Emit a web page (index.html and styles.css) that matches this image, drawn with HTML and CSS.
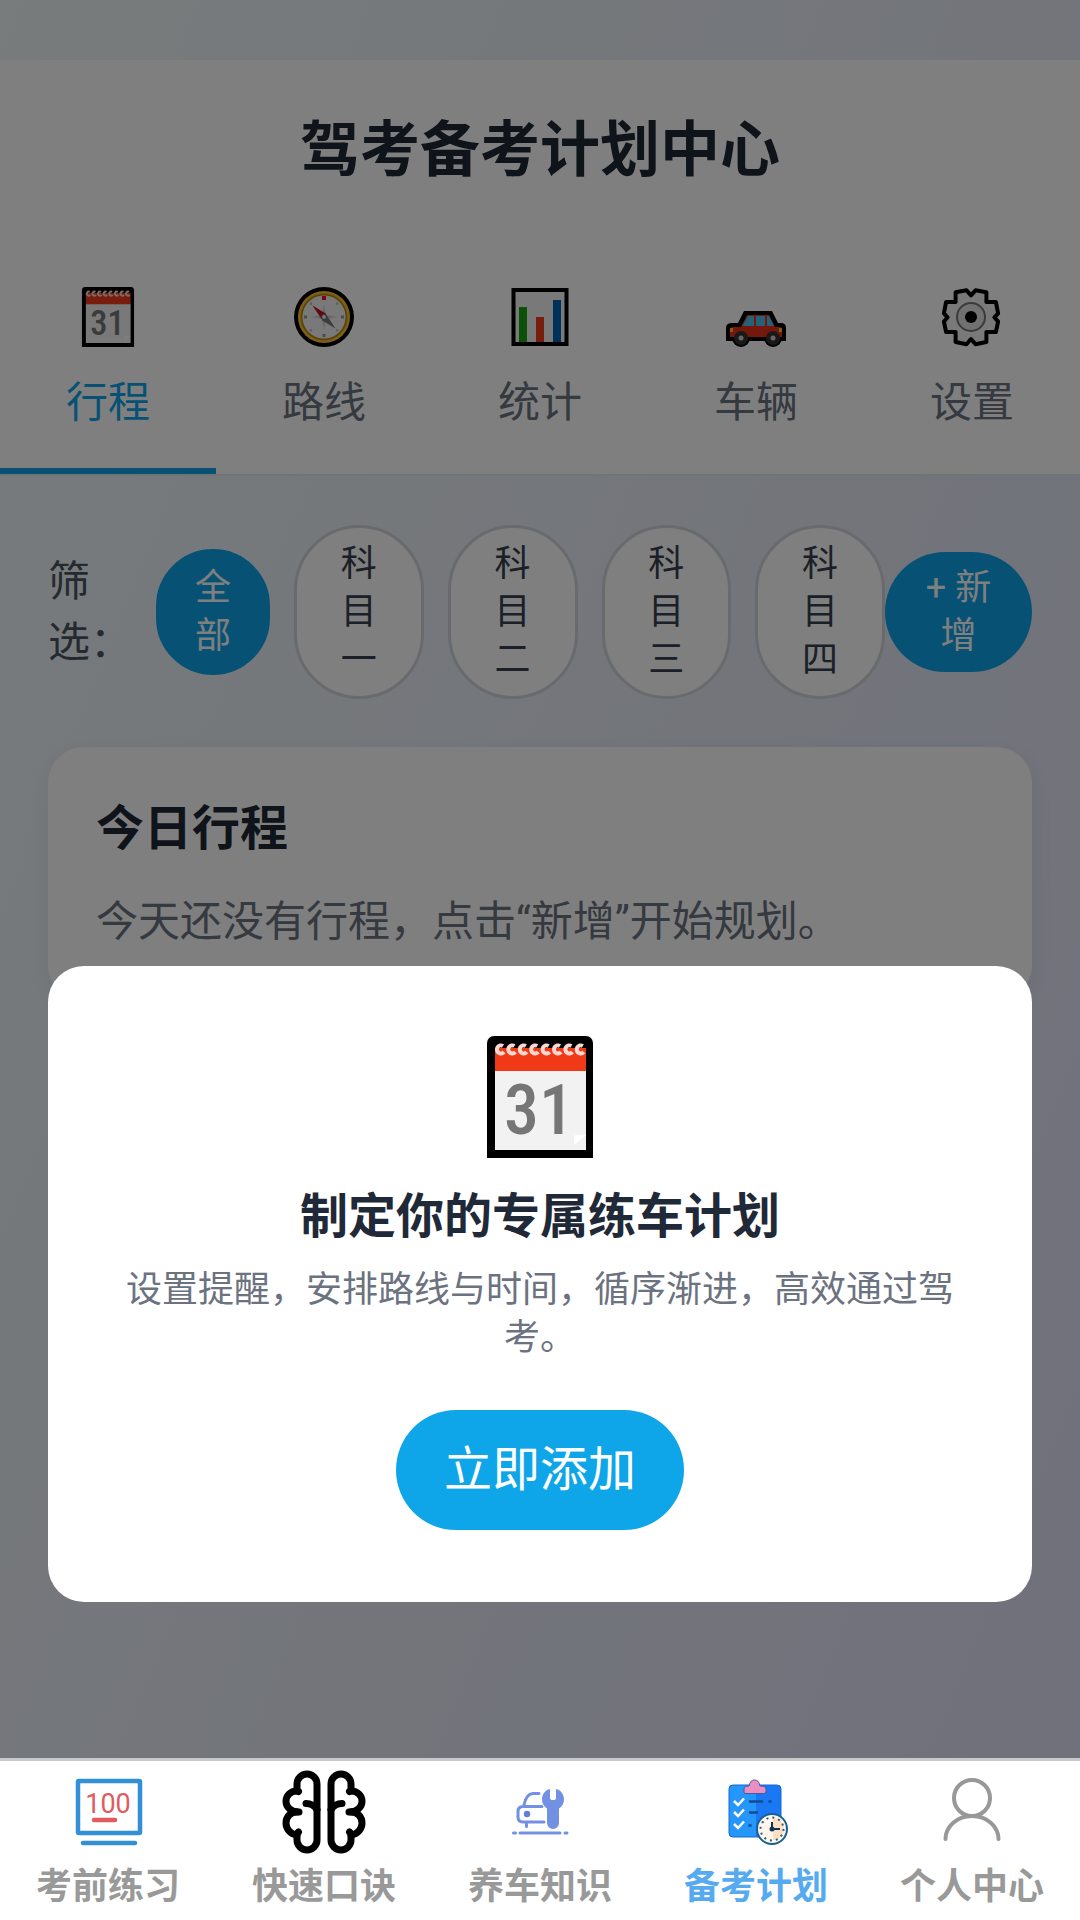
FILE: index.html
```html
<!DOCTYPE html>
<html lang="zh-CN">

<head>
    <meta charset="UTF-8">
    <meta name="viewport" content="width=device-width, initial-scale=1.0">
    <title>驾考备考计划中心</title>
    <link rel="stylesheet" href="styles.css">
</head>

<body>
    <header class="header">
        <h1>驾考备考计划中心</h1>
        <nav class="tabs">
            <button type="button" class="tab tabactive">
                <svg width="60" height="60" viewBox="0 0 106 122">
                    <!-- 日历图标 弹窗共用 -->
                    <g id="calendar">
                        <path d="M0 122V7a7 7 0 0 1 7-7h92a7 7 0 0 1 7 7v115z" fill="#000" />
                        <path d="M8 34h91v80H8z" fill="#f2f2f2" />
                        <path d="M8 12h91v23H8z" fill="#f03a17" />
                        <g fill="none" stroke="#fbd9d2" stroke-width="4">
                            <path id="ring" d="M16 10a4 4 0 1 0 1 6" />
                            <use href="#ring" x="11.400" />
                            <use href="#ring" x="22.800" />
                            <use href="#ring" x="34.200" />
                            <use href="#ring" x="45.600" />
                            <use href="#ring" x="57" />
                            <use href="#ring" x="68.400" />
                            <use href="#ring" x="79.800" />
                        </g>
                        <text class="calday" x="52" y="98" text-anchor="middle">31</text>
                        <path d="M87 109v-8q0-2 3-2h9z" fill="#fff" />
                    </g>
                </svg>
                <span>行程</span>
            </button>
            <button type="button" class="tab">
                <svg width="60" height="60" viewBox="0 0 60 60">
                    <circle cx="30" cy="30" r="30" fill="#000" />
                    <circle cx="30" cy="30" r="26" fill="#fdc02f" />
                    <circle cx="30" cy="30" r="22.500" fill="#f2f2f2" stroke="#b88b18" stroke-width="2" />
                    <path d="M28 9h4v4h-4z" fill="#e81224" />
                    <path d="M28.500 47h3v3h-3zM10 28.500h3v3h-3zM47 28.500h3v3h-3zM42.500 15l2 2-2 1zM17.500 15l-2 2 2 1zM42.500 45l2-2-2-1zM17.500 45l-2-2 2-1z" fill="#999" />
                    <path d="M30 17l2 11 11 2-11 2-2 11-2-11-11-2 11-2z" fill="#cfcfcf" />
                    <path d="M18.500 18.500l14 8.500-5 5z" fill="#c50f1f" />
                    <path d="M41.500 41.500l-14-8.500 5-5z" fill="#767676" />
                    <circle cx="30" cy="30" r="2.500" fill="#eee" stroke="#666" />
                </svg>
                <span>路线</span>
            </button>
            <button type="button" class="tab">
                <svg width="60" height="60" viewBox="0 0 60 60">
                    <path d="M3.500 3h53v54h-53z" fill="#f2f2f2" stroke="#000" stroke-width="4" />
                    <path d="M9 20h8v35H9z" fill="#16a50d" />
                    <path d="M26 30h8v25h-8z" fill="#f03a17" />
                    <path d="M43 13h8v42h-8z" fill="#0063b1" />
                </svg>
                <span>统计</span>
            </button>
            <button type="button" class="tab">
                <svg width="60" height="60" viewBox="0 0 60 60">
                    <path d="M0 54V41q0-5 6-5h6l6-12h28l6 12h3q5 0 5 5v13z" fill="#000" />
                    <circle cx="15" cy="51" r="9" fill="#000" />
                    <circle cx="47" cy="51" r="9" fill="#000" />
                    <path d="M4 50v-8q0-2 3-2h8l6-12h22l6 12h4q3 0 3 2v8z" fill="#e8301a" />
                    <path d="M22 29h6v10H16.500zM30 29h9v10h-9zM41 29h2l5 10h-7z" fill="#4cc2f1" />
                    <path d="M4 41h3v4H4zM53 41h3v4h-3z" fill="#fdc02f" />
                    <circle cx="15" cy="51" r="7" fill="#333" />
                    <circle cx="47" cy="51" r="7" fill="#333" />
                    <circle cx="15" cy="51" r="2.500" fill="#ccc" />
                    <circle cx="47" cy="51" r="2.500" fill="#ccc" />
                </svg>
                <span>车辆</span>
            </button>
            <button type="button" class="tab">
                <svg width="60" height="60" viewBox="0 0 60 60">
                    <path d="M13.600 5.300l10.900-2 4.500 5 4.500-5 10.900 2v9.700h9.500l2.200 11.400-3.700 3.900 3.700 4.300-2.200 10.400h-9.500v10l-10.900 2.300-4.500-5.300-4.500 5.300-10.900-2.300v-10H4.100L1.900 34.600l3.700-4.300-3.700-3.900L4.100 15h9.500z" fill="#f2f2f2" stroke="#000" stroke-width="4" stroke-linejoin="round" />
                    <circle cx="29" cy="30" r="14" fill="#e3e3e3" stroke="#767676" stroke-width="2" />
                    <circle cx="29" cy="30" r="6" fill="#000" />
                </svg>
                <span>设置</span>
            </button>
        </nav>
    </header>

    <main>
        <div class="filter">
            <span class="filterlabel">筛选：</span>
            <div class="chips">
                <button type="button" class="chip chipactive">全部</button>
                <button type="button" class="chip">科目一</button>
                <button type="button" class="chip">科目二</button>
                <button type="button" class="chip">科目三</button>
                <button type="button" class="chip">科目四</button>
            </div>
            <button type="button" class="addbtn">+ 新增</button>
        </div>

        <section class="card">
            <h2>今日行程</h2>
            <p>今天还没有行程，点击“新增”开始规划。</p>
        </section>
    </main>

    <!-- 遮罩和弹窗 -->
    <div class="mask">
        <div class="modal" role="dialog" aria-labelledby="modaltitle">
            <svg width="106" height="122"><use href="#calendar" /></svg>
            <h2 id="modaltitle">制定你的专属练车计划</h2>
            <p>设置提醒，安排路线与时间，循序渐进，高效通过驾考。</p>
            <button type="button">立即添加</button>
        </div>
    </div>

    <!-- 底部导航 -->
    <nav class="tabbar">
        <a href="#practice">
            <svg width="84" height="84" viewBox="0 0 84 84">
                <rect x="12" y="11" width="62" height="52" rx="1" fill="none" stroke="#3390d6" stroke-width="4.500" />
                <path d="M17 73h52" stroke="#3390d6" stroke-width="4.500" stroke-linecap="round" />
                <text class="score" x="42" y="43" text-anchor="middle">100</text>
                <path d="M28 50h21" stroke="#e05a5e" stroke-width="4.500" stroke-linecap="round" />
            </svg>
            <span>考前练习</span>
        </a>
        <a href="#tips">
            <svg width="84" height="84" viewBox="0 0 84 84">
                <g id="brain" fill="none" stroke="#000" stroke-width="7" stroke-linecap="round" stroke-linejoin="round">
                    <path d="M16.500 21.500q-1.500-1-1.500-4V14a10 10 0 0 1 20 0v56a10 10 0 0 1-20 0v-4q0-3 1.500-4" />
                    <path d="M15 21C8 21 4 26 4 31.500S9 42 17 42" />
                    <path d="M15 42C8 42 4 47.500 4 53s4 11 11 12" />
                    <path d="M24 33.500q7 0 11 6" />
                </g>
                <use href="#brain" transform="matrix(-1 0 0 1 84 0)" />
            </svg>
            <span>快速口诀</span>
        </a>
        <a href="#care">
            <svg width="84" height="84" viewBox="0 0 84 84">
                <g fill="none" stroke="#7391e2" stroke-width="3" stroke-linecap="round">
                    <path d="M26 35q2-11 9-11.500h6M44 36.500H25q-5 0-5 5V47q0 5 5 5h21M28.500 53v3.500M22 63h40M15.500 63h2M67 63h2" />
                </g>
                <circle cx="29" cy="44" r="3.200" fill="#5f7fd8" />
                <path d="M52 19v9q0 2 3 2t3-2v-9c5 1 8 5.500 8 10.500 0 4-2 7-5 9V53a6 6 0 0 1-12 0V38.500c-3-2-5-5-5-9C44 24.500 47 20 52 19z" fill="#7391e2" />
            </svg>
            <span>养车知识</span>
        </a>
        <a href="#plan" class="baractive">
            <svg width="84" height="84" viewBox="0 0 84 84">
                <rect x="15" y="15" width="52" height="52" rx="4" fill="#1a78f5" />
                <path d="M42 15H19q-4 0-4 4v44q0 4 4 4h23z" fill="#2596fb" />
                <rect x="15" y="15" width="52" height="52" rx="4" fill="none" stroke="#1668cf" />
                <path d="M30 22v-3q0-3 5-3 1-6 5.500-6t5.500 6q6 0 6 3v3q0 1.500-2 1.500H32q-2 0-2-1.500z" fill="#ea8fc0" stroke="#4b5aa0" />
                <g fill="none" stroke="#fff" stroke-width="2.500">
                    <path d="M20 31l4 4 6-6.500M20 42l4 4 6-6.500M20 54l4 4 6-6.500" />
                </g>
                <path d="M36 31.500h12M55.500 31.500h1M36 42.500h7M35.500 55.500h1" stroke="#164a8f" stroke-width="2.500" stroke-linecap="round" />
                <circle cx="58" cy="59" r="15" fill="#fff5ea" stroke="#17608f" stroke-width="2" />
                <path d="M59 59V48a11 11 0 0 1 0 22z" fill="#fde0c2" />
                <circle cx="58" cy="59" r="11.500" fill="none" stroke="#17608f" stroke-width="2" stroke-dasharray="2 4.021" />
                <path d="M58 52v7h8" fill="none" stroke="#0d3556" stroke-width="2" />
                <circle cx="58" cy="59" r="2.500" fill="#0d3556" />
            </svg>
            <span>备考计划</span>
        </a>
        <a href="#me">
            <svg width="84" height="84" viewBox="0 0 84 84">
                <g fill="none" stroke="#989898" stroke-width="4" stroke-linecap="round">
                    <circle cx="42" cy="28" r="18" />
                    <path d="M15.500 69a26.500 23 0 0 1 53 0" />
                </g>
            </svg>
            <span>个人中心</span>
        </a>
    </nav>
</body>

</html>
```

FILE: styles.css
```css
* {
    margin: 0;
    padding: 0;
    box-sizing: border-box;
}

body {
    display: flex;
    flex-direction: column;
    min-height: 100vh;
    padding-top: 60px;
    font-family: Roboto, "Noto Sans CJK SC", sans-serif;
    color: #1f2937;
    background: linear-gradient(112deg, #f1f8f8 0%, #e7ecf7 50%, #e1e1f6 100%);
}

button {
    border: none;
    font-family: inherit;
    cursor: pointer;
}

a {
    text-decoration: none;
}

svg {
    display: block;
}

.calday {
    font: 500 70px "Roboto Condensed", Roboto, sans-serif;
    fill: #767676;
}

.score {
    font: 27px Roboto, sans-serif;
    fill: #e05a5e;
}

/* 顶部 */
.header {
    background: #fff;
    border-bottom: 2px solid #e5e7eb;
}

.header h1 {
    padding: 49px 48px 43px;
    font-size: 60px;
    line-height: 84px;
    text-align: center;
}

.tabs {
    display: flex;
}

.tab {
    flex: 1;
    display: flex;
    flex-direction: column;
    align-items: center;
    gap: 26px;
    padding: 51px 0 35px;
    border-bottom: 6px solid transparent;
    background: none;
    color: #6b7280;
    font-size: 42px;
    line-height: 60px;
}

.tabactive {
    color: #0ea5e9;
    border-bottom-color: #0ea5e9;
}

/* 筛选 */
main {
    flex: 1;
    padding: 49px 48px;
}

.filter {
    display: flex;
    align-items: center;
    margin-bottom: 48px;
}

.filterlabel {
    width: 84px;
    margin-right: 24px;
    color: #4b5563;
    font-size: 42px;
    line-height: 61px;
}

.chips {
    flex: 1;
    display: flex;
    align-items: center;
    gap: 24px;
}

.chip {
    flex: 1;
    padding: 12px 36px;
    border: 3px solid #d1d5db;
    border-radius: 96px;
    background: #fff;
    color: #374151;
    font-size: 36px;
    line-height: 48px;
}

.chipactive {
    flex: none;
    width: 114px;
    border-color: #0ea5e9;
    background: #0ea5e9;
    color: #fff;
}

.addbtn {
    width: 147px;
    padding: 12px 36px;
    border-radius: 60px;
    background: #0ea5e9;
    color: #fff;
    font-size: 36px;
    line-height: 48px;
}

.card {
    padding: 48px;
    border-radius: 36px;
    background: #fff;
    box-shadow: 0 6px 24px rgba(0, 0, 0, 0.06);
}

.card h2 {
    margin-bottom: 28px;
    font-size: 48px;
    line-height: 68px;
}

.card p {
    color: #6b7280;
    font-size: 42px;
    line-height: 62px;
}

/* 弹窗 */
.mask {
    position: fixed;
    inset: 0;
    display: flex;
    align-items: flex-end;
    padding: 0 48px 318px;
    background: rgba(0, 0, 0, 0.5);
}

.modal {
    flex: 1;
    display: flex;
    flex-direction: column;
    align-items: center;
    padding: 70px 72px 72px;
    border-radius: 36px;
    background: #fff;
    text-align: center;
}

.modal h2 {
    margin: 28px 0 18px;
    font-size: 48px;
    line-height: 62px;
}

.modal p {
    margin-bottom: 48px;
    color: #6b7280;
    font-size: 36px;
    line-height: 48px;
}

.modal button {
    padding: 0 48px;
    border-radius: 60px;
    background: #0ea5e9;
    color: #fff;
    font-size: 48px;
    line-height: 120px;
}

/* 底部导航 */
.tabbar {
    position: sticky;
    bottom: 0;
    z-index: 2;
    display: flex;
    height: 162px;
    border-top: 3px solid #c8c9cc;
    background: #fff;
}

.tabbar a {
    flex: 1;
    display: flex;
    flex-direction: column;
    align-items: center;
    gap: 9px;
    padding-top: 9px;
    color: #999;
    font-size: 36px;
    font-weight: bold;
    line-height: 48px;
}

.tabbar .baractive {
    color: #56abf0;
}
```
